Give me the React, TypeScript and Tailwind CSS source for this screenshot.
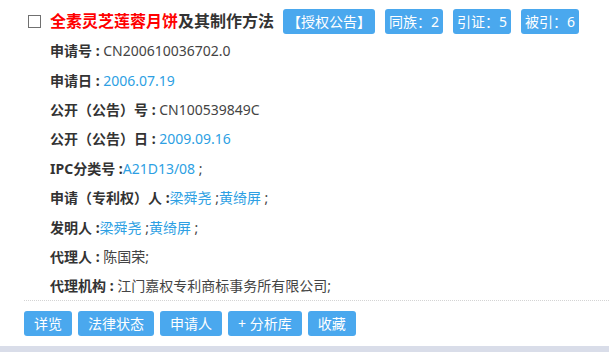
import React from "react";

const font = { fontFamily: '"Noto Sans", "Noto Sans CJK SC", sans-serif' };

type Part = { text: string; link?: boolean };

const rows: { label: string; parts: Part[] }[] = [
  { label: "申请号 : ", parts: [{ text: "CN200610036702.0" }] },
  { label: "申请日 : ", parts: [{ text: "2006.07.19", link: true }] },
  { label: "公开（公告）号 : ", parts: [{ text: "CN100539849C" }] },
  { label: "公开（公告）日 : ", parts: [{ text: "2009.09.16", link: true }] },
  { label: "IPC分类号 :", parts: [{ text: "A21D13/08", link: true }, { text: " ;" }] },
  {
    label: "申请（专利权）人 :",
    parts: [{ text: "梁舜尧", link: true }, { text: " ;" }, { text: "黄绮屏", link: true }, { text: " ;" }],
  },
  {
    label: "发明人 :",
    parts: [{ text: "梁舜尧", link: true }, { text: " ;" }, { text: "黄绮屏", link: true }, { text: " ;" }],
  },
  { label: "代理人 : ", parts: [{ text: "陈国荣;" }] },
  { label: "代理机构 : ", parts: [{ text: "江门嘉权专利商标事务所有限公司;" }] },
];

const badges = ["【授权公告】", "同族：2", "引证：5", "被引：6"];
const actions = ["详览", "法律状态", "申请人", "+ 分析库", "收藏"];

export default function App() {
  return (
    <div className="w-[609px] h-[352px] bg-white flex flex-col overflow-hidden" style={font}>
      <div className="pl-[24px] flex-1">
        <div className="pl-[4px] pt-[6px] h-[36px] flex items-center">
          <span className="w-[13px] h-[13px] border border-[#707070] bg-white mr-[9px] mt-[1px]" />
          <span className="text-[16px] font-bold leading-none">
            <span className="text-[#ff0000]">全素灵芝莲蓉月饼</span>
            <span className="text-[#333]">及其制作方法</span>
          </span>
          <div className="flex gap-[10px] ml-[9px]">
            {badges.map((b) => (
              <span
                key={b}
                className="h-[25px] px-[4px] flex items-center rounded-[3px] bg-[#4aa8ee] text-white text-[14px]"
              >
                {b}
              </span>
            ))}
          </div>
        </div>
        <div className="pl-[26px]">
          {rows.map((r) => (
            <div key={r.label} className="h-[29.4px] flex items-center text-[14px] whitespace-pre">
              <span className="font-bold text-[#333]">{r.label}</span>
              {r.parts.map((p, i) => (
                <span key={i} className={p.link ? "text-[#2d9fe3]" : "text-[#444]"}>
                  {p.text}
                </span>
              ))}
            </div>
          ))}
        </div>
        <div className="border-t border-dotted border-[#d4d4d4] mt-[-1px]" />
        <div className="flex gap-[6px] mt-[10px]">
          {actions.map((a) => (
            <span
              key={a}
              className="h-[25px] px-[10px] flex items-center rounded-[3px] bg-[#4aa8ee] text-white text-[14px] whitespace-pre"
            >
              {a}
            </span>
          ))}
        </div>
      </div>
      <div className="h-[6px] bg-[#d9dde9]" />
    </div>
  );
}
